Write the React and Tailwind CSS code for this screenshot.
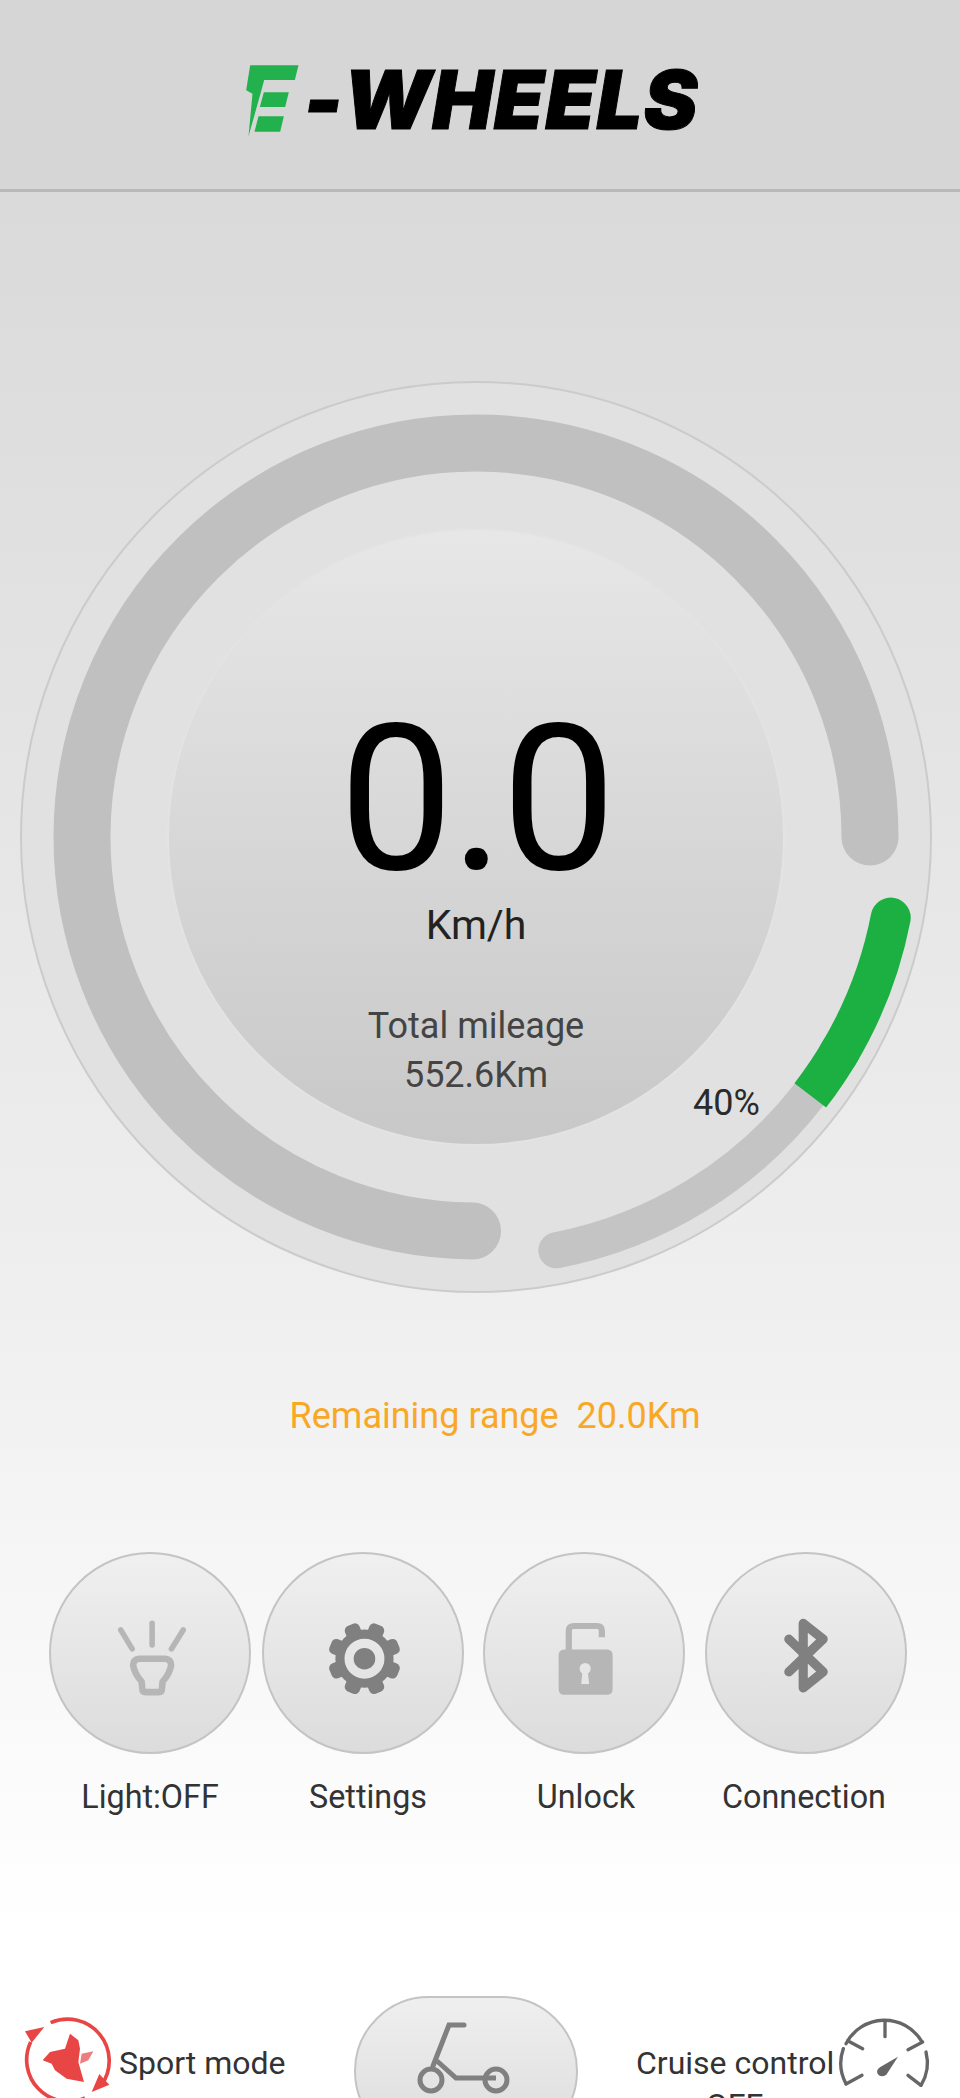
import React from "react";

const font = { fontFamily: "Roboto, sans-serif" };

function polar(r, deg) {
  const a = (deg * Math.PI) / 180;
  return [456 + r * Math.cos(a), 456 + r * Math.sin(a)];
}
function arc(r, from, to) {
  const [x1, y1] = polar(r, from);
  const [x2, y2] = polar(r, to);
  const large = Math.abs(to - from) > 180 ? 1 : 0;
  const sweep = to > from ? 1 : 0;
  return `M${x1} ${y1} A${r} ${r} 0 ${large} ${sweep} ${x2} ${y2}`;
}

function Logo() {
  return (
    <div className="flex items-start">
      <svg width="57" height="76" viewBox="130 190 170 228" className="mt-[-2px] shrink-0">
        <g fill="#22b14c">
          <polygon points="145,197 290,197 279,241 187,241 178,275 140,410 152,282 133,272" />
          <polygon points="186,278 261,278 250,322 174,322" />
          <polygon points="170,350 246,350 235,396 158,396" />
        </g>
      </svg>
      <span
        className="ml-[2px] text-[81px] leading-[70px] italic font-black text-black tracking-[1px] whitespace-nowrap [-webkit-text-stroke:1px_black]"
        style={{ fontFamily: "Inter, sans-serif" }}
      >
        -WHEELS
      </span>
    </div>
  );
}

function Gauge() {
  return (
    <div className="relative w-[912px] h-[912px] ml-[20px] rounded-full border-2 border-[#cbcbcb] bg-[#e1e1e1] flex items-center justify-center">
      <svg viewBox="0 0 912 912" className="absolute left-[-2px] top-[-2px] w-[912px] h-[912px]" fill="none">
        <path d={arc(394, 90.5, 360)} stroke="#c0c0c0" strokeWidth="57" strokeLinecap="round" />
        <path d={arc(421, 79, 37.7)} stroke="#c4c4c4" strokeWidth="36" strokeLinecap="round" />
        <path d={arc(422.5, 37.7, 30)} stroke="#1cb043" strokeWidth="40" />
        <path d={arc(422.5, 31, 11)} stroke="#1cb043" strokeWidth="40" strokeLinecap="round" />
      </svg>
      <div className="relative w-[618px] h-[618px] rounded-full border-2 border-[#e3e3e3] bg-gradient-to-b from-[#e7e7e7] to-[#c8c8c8] flex flex-col items-center pt-[168px]" style={font}>
        <div className="text-[204px] leading-[204px] text-black tracking-[-3px]">0.0</div>
        <div className="text-[41px] leading-[46px] text-[#222222]">Km/h</div>
        <div className="text-[36px] leading-[49px] text-[#444444] mt-[54px]">Total mileage</div>
        <div className="text-[36px] leading-[48px] text-[#444444]">552.6Km</div>
      </div>
      <div className="absolute left-[671px] top-[700px] text-[36px] leading-[40px] text-[#2a2a2a]" style={font}>40%</div>
    </div>
  );
}

function RoundButton({ left, children, box }) {
  return (
    <div className={`w-[202px] h-[202px] rounded-full border-2 border-[#c4c4c4] bg-gradient-to-b from-[#f0f0f0] to-[#dcdcdc] shrink-0 ${left}`}>
      <svg viewBox={box} className="w-full h-full" fill="none">{children}</svg>
    </div>
  );
}

function Buttons() {
  const gearTeeth = [0, 1, 2, 3, 4, 5, 6, 7];
  return (
    <div>
      <div className="flex pl-[49px]">
        <RoundButton left="" box="57 38 605 605">
          <g stroke="#b6b6b6" strokeWidth="17" strokeLinecap="round">
            <path d="M270 270 L305 328" />
            <path d="M366 250 L366 316" />
            <path d="M461 270 L425 328" />
          </g>
          <path d="M326 358 L406 358 Q424 360 424 378 Q420 404 398 428 L396 450 Q396 460 386 460 L346 460 Q336 460 336 450 L334 428 Q312 404 308 378 Q308 360 326 358 Z" stroke="#b6b6b6" strokeWidth="20" strokeLinejoin="round" />
        </RoundButton>
        <RoundButton left="ml-[11px]" box="695 38 605 605">
          <g fill="#808080">
            {gearTeeth.map((i) => (
              <rect key={i} x="-24" y="-112" width="48" height="50" rx="15" transform={`translate(1002 358) rotate(${22.5 + 45 * i})`} />
            ))}
            <circle cx="1002" cy="358" r="33" />
          </g>
          <circle cx="1002" cy="358" r="75" stroke="#808080" strokeWidth="28" />
        </RoundButton>
        <RoundButton left="ml-[19px]" box="40 38 605 605">
          <rect x="265" y="330" width="165" height="138" rx="16" fill="#b6b6b6" />
          <path d="M296 335 L296 272 Q296 258 312 258 L382 258 Q397 258 397 272 L397 292" stroke="#b6b6b6" strokeWidth="19" />
          <circle cx="346" cy="388" r="17" fill="#e6e6e6" />
          <polygon points="338,395 354,395 358,435 334,435" fill="#e6e6e6" />
        </RoundButton>
        <RoundButton left="ml-[20px]" box="705 38 605 605">
          <path d="M955 298 L1060 398 L999 447 L999 250 L1060 298 L955 398" stroke="#808080" strokeWidth="28" strokeLinejoin="round" strokeLinecap="round" />
        </RoundButton>
      </div>
      <div className="grid grid-cols-[218px_218px_218px_218px] pl-[41px] mt-[20px] text-[32.3px] leading-[46px] text-[#333333] text-center" style={font}>
        <div>Light:OFF</div>
        <div>Settings</div>
        <div>Unlock</div>
        <div>Connection</div>
      </div>
    </div>
  );
}

function BottomRow() {
  return (
    <div className="flex items-start" style={font}>
      <div className="flex items-start w-[354px] pl-[20px] pt-[16px] shrink-0">
        <svg width="95" height="86" viewBox="30 40 285 258" fill="none" className="shrink-0">
          <g stroke="#e84545" strokeWidth="11">
            <path d="M122 72 A125 125 0 0 1 275 258" />
            <path d="M225 298 A125 125 0 0 1 62 130" />
          </g>
          <g fill="#e84545">
            <polygon points="45,98 103,85 65,132" />
            <polygon points="298,258 245,280 268,226" />
            <polygon points="98,185 120,160 165,150 180,105 205,125 210,150 205,190 222,250 170,240 135,215 125,195" />
            <polygon points="215,165 250,158 235,185 210,195" opacity="0.7" />
          </g>
        </svg>
        <div className="text-[32px] leading-[42px] text-[#333333] mt-[30px] ml-[4px] whitespace-nowrap">Sport mode</div>
      </div>
      <div className="w-[224px] h-[150px] rounded-[76px] border-2 border-[#c4c4c4] bg-gradient-to-b from-[#efefef] to-[#dcdcdc] shrink-0">
        <svg viewBox="0 0 220 146" className="w-full h-full" fill="none">
          <g stroke="#808080" strokeWidth="5">
            <path d="M108 27 L93 27 L77 68" strokeLinecap="round" />
            <path d="M81 63 L100 80 L140 80" />
            <circle cx="75" cy="82" r="11" />
            <circle cx="140" cy="82" r="11" />
          </g>
        </svg>
      </div>
      <div className="flex items-start pl-[58px] pt-[21px]">
        <div className="text-[32px] leading-[42px] text-[#333333] text-center w-[197px] mt-[25px] whitespace-nowrap">
          Cruise control<br />OFF
        </div>
        <svg width="100" height="78" viewBox="1065 145 300 234" fill="none" className="ml-[3px] shrink-0">
          <g stroke="#666666" strokeWidth="10" strokeLinecap="round">
            <path d="M1095 225 A130 130 0 0 1 1322 218" />
            <path d="M1087 240 A130 130 0 0 0 1095 345" />
            <path d="M1335 250 A130 130 0 0 1 1320 350" />
            <path d="M1212 158 L1212 204" />
            <path d="M1100 216 L1145 240" />
            <path d="M1325 220 L1281 243" />
            <path d="M1095 346 L1143 320" />
            <path d="M1320 350 L1281 320" />
          </g>
          <path d="M1251 264 L1216 318 Q1200 328 1190 316 Q1184 304 1198 295 Z" fill="#666666" />
        </svg>
      </div>
    </div>
  );
}

export default function App() {
  return (
    <div className="w-[960px] h-[2098px] overflow-hidden bg-gradient-to-b from-[#d6d6d6] via-[#efefef] via-62% to-white to-92%">
      <header className="h-[192px] bg-[#d6d6d6] border-b-[3px] border-[#b8b8b8] flex pl-[245px] pt-[65px]">
        <Logo />
      </header>
      <main className="pt-[189px]">
        <Gauge />
        <div className="mt-[98px] text-center text-[36px] leading-[50px] text-[#f9a825] pl-[30px]" style={font}>
          Remaining range&nbsp;&nbsp;20.0Km
        </div>
        <div className="mt-[111px]">
          <Buttons />
        </div>
        <div className="mt-[176px]">
          <BottomRow />
        </div>
      </main>
    </div>
  );
}
